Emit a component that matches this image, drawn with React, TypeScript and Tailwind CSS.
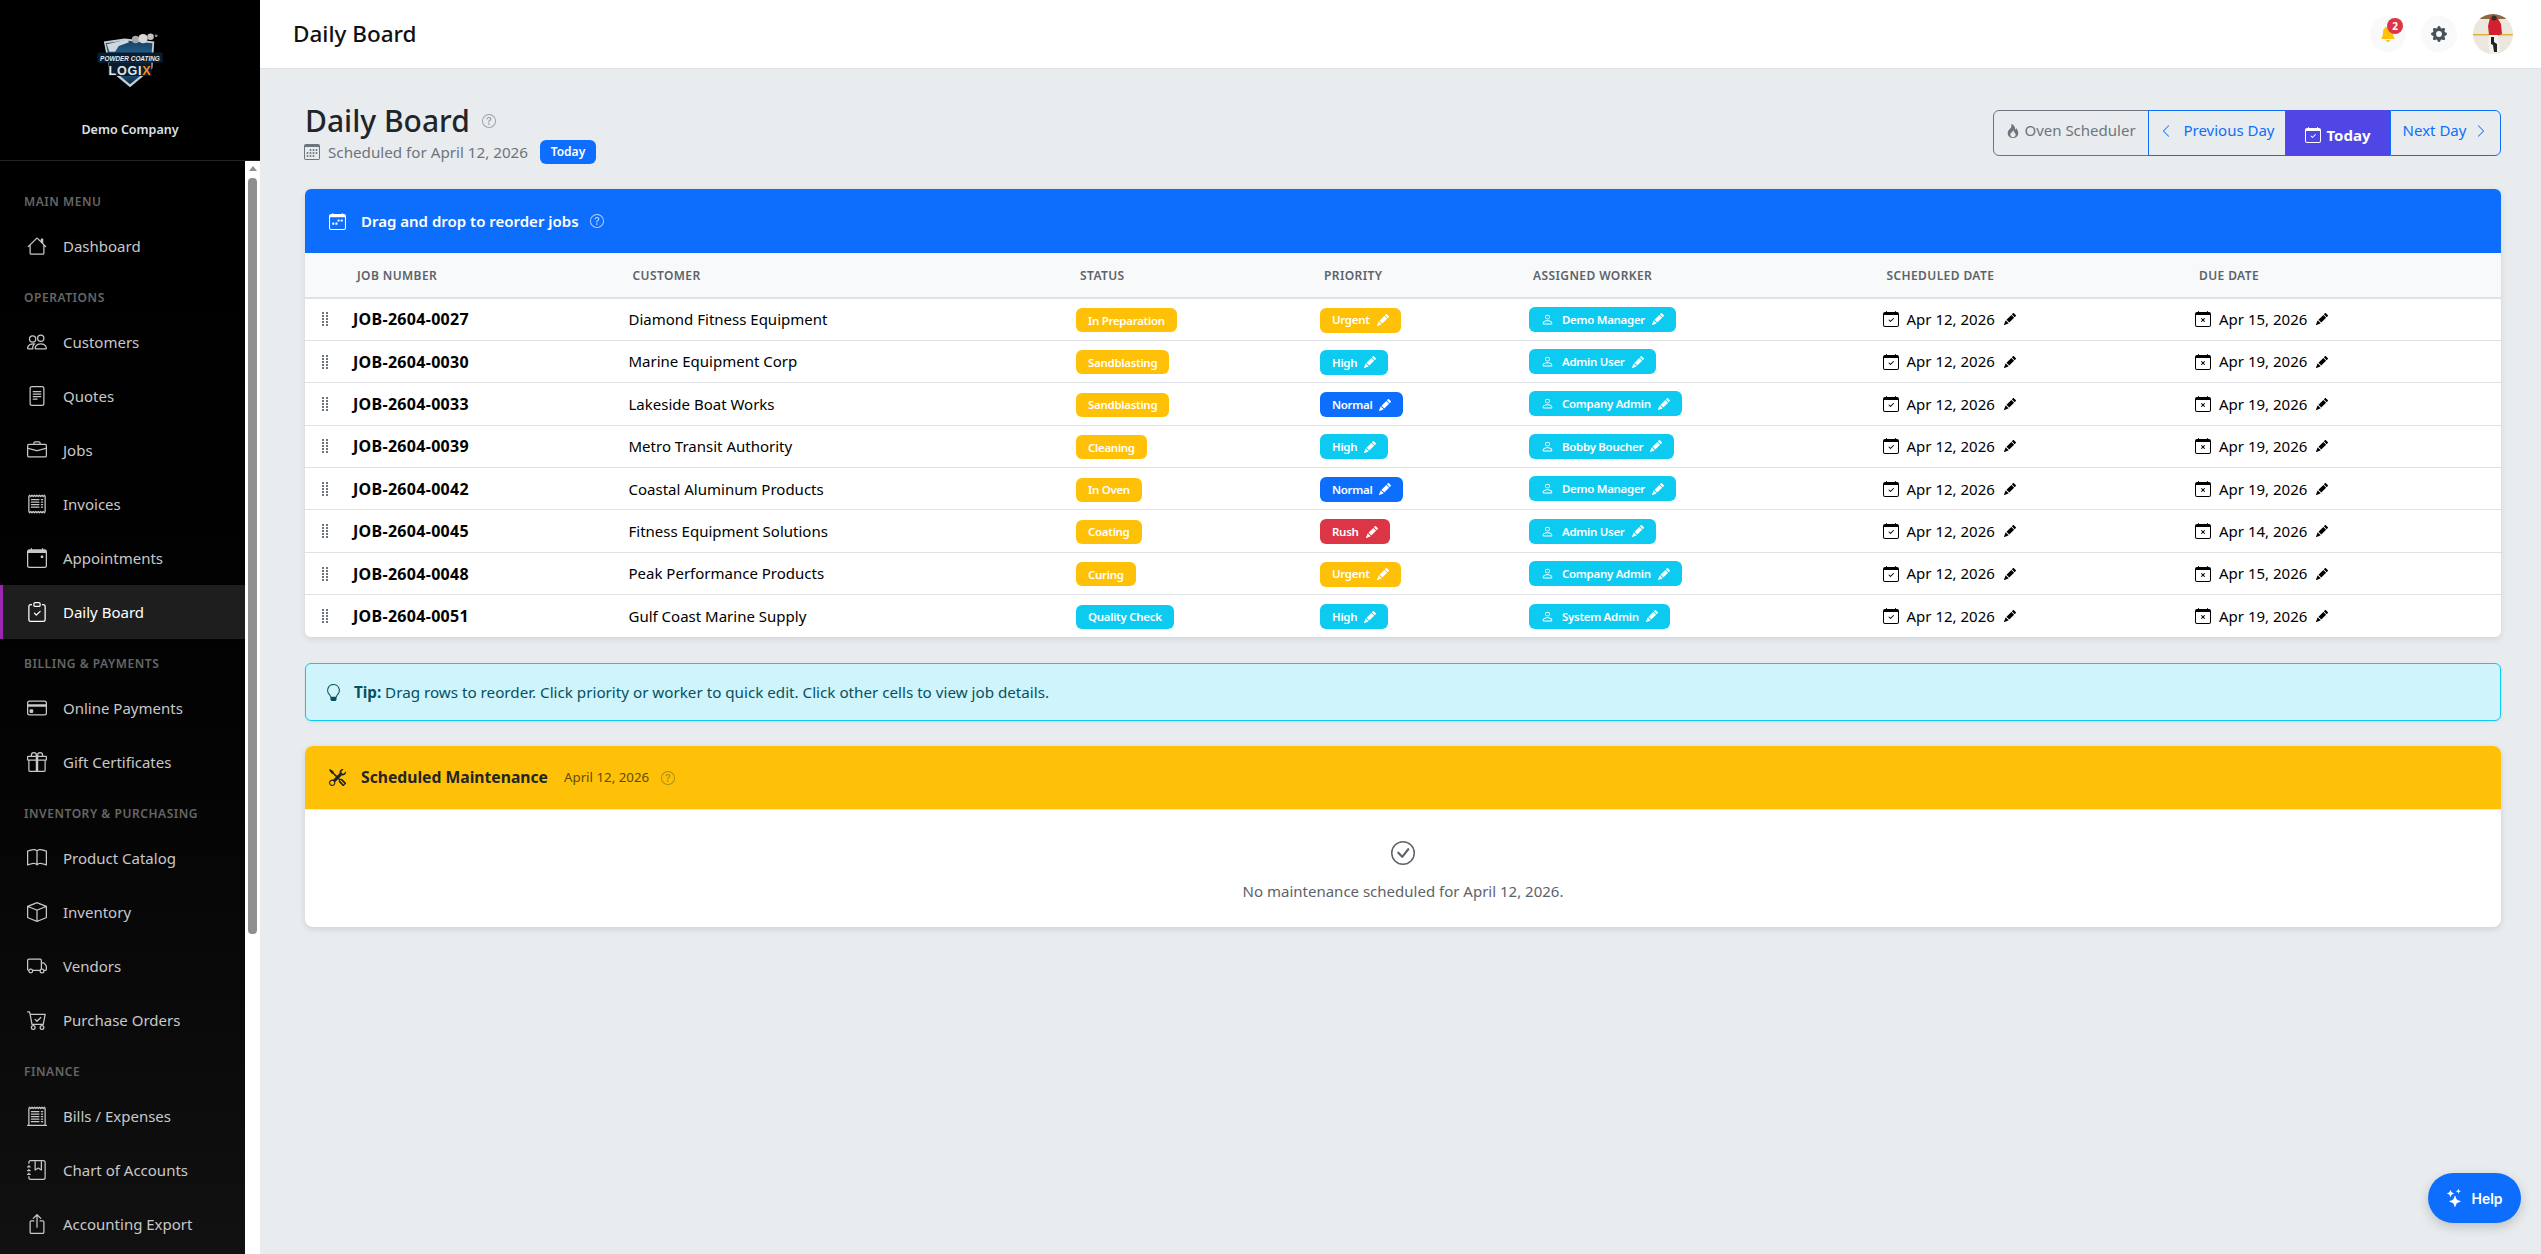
import type { ReactNode } from "react";
import {
  BsBellFill, BsBook, BsBox, BsBoxArrowUp, BsBriefcase, BsCalendar3, BsCalendarCheck, BsCalendarEvent,
  BsCalendarWeek, BsCalendarX, BsCartCheck, BsCheckCircle, BsChevronLeft, BsChevronRight, BsClipboardCheck,
  BsCreditCard, BsFileText, BsFire, BsGearFill, BsGift, BsHouse, BsJournalBookmark, BsLightbulb,
  BsPencilFill, BsPeople, BsPerson, BsQuestionCircle, BsReceipt, BsReceiptCutoff, BsStars, BsTools, BsTruck,
} from "react-icons/bs";

type NavItem = { label: string; icon: ReactNode; active?: boolean };
type NavSection = { title: string; items: NavItem[] };

const sections: NavSection[] = [
  { title: "Main Menu", items: [{ label: "Dashboard", icon: <BsHouse /> }] },
  {
    title: "Operations",
    items: [
      { label: "Customers", icon: <BsPeople /> },
      { label: "Quotes", icon: <BsFileText /> },
      { label: "Jobs", icon: <BsBriefcase /> },
      { label: "Invoices", icon: <BsReceipt /> },
      { label: "Appointments", icon: <BsCalendarEvent /> },
      { label: "Daily Board", icon: <BsClipboardCheck />, active: true },
    ],
  },
  {
    title: "Billing & Payments",
    items: [
      { label: "Online Payments", icon: <BsCreditCard /> },
      { label: "Gift Certificates", icon: <BsGift /> },
    ],
  },
  {
    title: "Inventory & Purchasing",
    items: [
      { label: "Product Catalog", icon: <BsBook /> },
      { label: "Inventory", icon: <BsBox /> },
      { label: "Vendors", icon: <BsTruck /> },
      { label: "Purchase Orders", icon: <BsCartCheck /> },
    ],
  },
  {
    title: "Finance",
    items: [
      { label: "Bills / Expenses", icon: <BsReceiptCutoff /> },
      { label: "Chart of Accounts", icon: <BsJournalBookmark /> },
      { label: "Accounting Export", icon: <BsBoxArrowUp /> },
    ],
  },
];

const amber = "bg-[#ffc107]";
const cyan = "bg-[#0dcaf0]";
const blue = "bg-[#0d6efd]";
const red = "bg-[#dc3545]";

const jobs = [
  { num: "JOB-2604-0027", customer: "Diamond Fitness Equipment", status: "In Preparation", statusBg: amber, priority: "Urgent", priorityBg: amber, worker: "Demo Manager", due: "Apr 15, 2026" },
  { num: "JOB-2604-0030", customer: "Marine Equipment Corp", status: "Sandblasting", statusBg: amber, priority: "High", priorityBg: cyan, worker: "Admin User", due: "Apr 19, 2026" },
  { num: "JOB-2604-0033", customer: "Lakeside Boat Works", status: "Sandblasting", statusBg: amber, priority: "Normal", priorityBg: blue, worker: "Company Admin", due: "Apr 19, 2026" },
  { num: "JOB-2604-0039", customer: "Metro Transit Authority", status: "Cleaning", statusBg: amber, priority: "High", priorityBg: cyan, worker: "Bobby Boucher", due: "Apr 19, 2026" },
  { num: "JOB-2604-0042", customer: "Coastal Aluminum Products", status: "In Oven", statusBg: amber, priority: "Normal", priorityBg: blue, worker: "Demo Manager", due: "Apr 19, 2026" },
  { num: "JOB-2604-0045", customer: "Fitness Equipment Solutions", status: "Coating", statusBg: amber, priority: "Rush", priorityBg: red, worker: "Admin User", due: "Apr 14, 2026" },
  { num: "JOB-2604-0048", customer: "Peak Performance Products", status: "Curing", statusBg: amber, priority: "Urgent", priorityBg: amber, worker: "Company Admin", due: "Apr 15, 2026" },
  { num: "JOB-2604-0051", customer: "Gulf Coast Marine Supply", status: "Quality Check", statusBg: cyan, priority: "High", priorityBg: cyan, worker: "System Admin", due: "Apr 19, 2026" },
];

const headers = ["Job Number", "Customer", "Status", "Priority", "Assigned Worker", "Scheduled Date", "Due Date"];

/* Logo du menu */
function Logo() {
  return (
    <svg width="68" height="56" viewBox="0 0 72 60">
      <defs>
        <linearGradient id="shield" x1="0" y1="0" x2="0" y2="1">
          <stop offset="0" stopColor="#173f63" />
          <stop offset="0.55" stopColor="#2a78ad" />
          <stop offset="1" stopColor="#0b2740" />
        </linearGradient>
      </defs>
      <path d="M8 9 L30 6 L62 9 L60 38 L36 58 L14 40 Z" fill="#c5ced6" />
      <path d="M10 11 L31 8 L60 11 L58 37 L36 55 L16 38 Z" fill="url(#shield)" />
      <path d="M11 12 L33 7 L35 10 L24 14 L20 20 L14 20 Z" fill="#cfd8df" />
      <circle cx="42" cy="7" r="4" fill="#a9a9a9" />
      <circle cx="50" cy="6" r="5" fill="#d8d8d8" />
      <circle cx="58" cy="4" r="3.5" fill="#c4c4c4" />
      <circle cx="64" cy="3" r="1.5" fill="#8d8d8d" />
      <rect x="1" y="21" width="70" height="11" rx="2" fill="#0a1c2e" />
      <rect x="13" y="32" width="46" height="14" fill="#0a1c2e" />
      <text x="36" y="29.5" textAnchor="middle" textLength="64" lengthAdjust="spacingAndGlyphs" fontFamily="Liberation Sans, sans-serif" fontStyle="italic" fontWeight="700" fontSize="7" fill="#e8edf2">POWDER COATING</text>
      <text x="36" y="44.5" textAnchor="middle" fontFamily="Liberation Sans, sans-serif" fontWeight="700" fontSize="13.5" letterSpacing="0.8" fill="#dfe5ea">
        LOGI<tspan fill="#f28c1e">X</tspan>
      </text>
    </svg>
  );
}

/* Photo de profil */
function Avatar() {
  return (
    <svg width="40" height="40" viewBox="0 0 40 40" className="rounded-full">
      <rect width="40" height="40" fill="#ece7de" />
      <rect width="40" height="5" fill="#8a6a45" />
      <rect y="20" width="40" height="1.5" fill="#d9b53a" />
      <path d="M17 4 L24 3 L28 10 L29 20 L24 22 L16 21 L15 12 Z" fill="#d3202e" />
      <path d="M16 21 L25 21 L27 36 L23 40 L17 39 L15 30 Z" fill="#f2f2f2" />
      <path d="M18 23 L21 23 L21 28 L24 30 L24 38 L21 38 L20 31 L18 30 Z" fill="#222222" />
      <circle cx="21" cy="4" r="2.5" fill="#3a2b22" />
    </svg>
  );
}

function Grip() {
  return (
    <svg width="6" height="14" viewBox="0 0 6 14" fill="#6c757d">
      {[0, 3, 6, 9, 12].map((y) => (
        <g key={y}>
          <rect x="0" y={y} width="2" height="2" />
          <rect x="4" y={y} width="2" height="2" />
        </g>
      ))}
    </svg>
  );
}

function Sidebar() {
  return (
    <aside className="flex h-full w-[260px] shrink-0 flex-col bg-gradient-to-b from-black to-[#111111]">
      <div className="flex h-[161px] shrink-0 flex-col items-center border-b border-[#222222] pt-[33px]">
        <Logo />
        <div className="mt-[32px] text-[12.5px] font-semibold leading-[18px] text-[#dee2e6]">Demo Company</div>
      </div>
      <div className="flex min-h-0 flex-1">
        <nav className="min-w-0 flex-1 overflow-hidden pt-[17px]">
          {sections.map((section, i) => (
            <div key={section.title}>
              <div className={`${i === 0 ? "pt-[16px]" : "pt-[17px]"} pb-[9px] pl-[24px] text-[12px] font-semibold uppercase leading-[16px] tracking-[0.55px] text-[#666666]`}>
                {section.title}
              </div>
              {section.items.map((item) => (
                <div
                  key={item.label}
                  className={`flex h-[54px] items-center border-l-[3px] pl-[24px] text-[15px] ${
                    item.active ? "border-[#9c27b0] bg-[#1e1e1e] text-white" : "border-transparent text-[#c8c8c8]"
                  }`}
                >
                  <span className="flex w-[36px] text-[20px]">{item.icon}</span>
                  {item.label}
                </div>
              ))}
            </div>
          ))}
        </nav>
        <div className="relative w-[15px] shrink-0 bg-white">
          <div className="mx-auto mt-[5px] h-0 w-0 border-x-[4px] border-b-[5px] border-x-transparent border-b-[#8f8f8f]" />
          <div className="mx-[3px] mt-[7px] h-[756px] rounded-[4px] bg-[#8f8f8f]" />
        </div>
      </div>
    </aside>
  );
}

function TopBar() {
  return (
    <header className="flex h-[69px] shrink-0 items-center justify-between border-b border-[#dee2e6] bg-white pl-[33px] pr-[28px]">
      <h1 className="text-[22.5px] font-medium leading-none text-[#111111]">Daily Board</h1>
      <div className="flex items-center">
        <div className="relative flex h-[36px] w-[36px] items-center justify-center rounded-full bg-[#f8f9fa] text-[16px] text-[#ffc107]">
          <BsBellFill />
          <span className="absolute right-[3px] top-[2px] flex h-[16px] w-[16px] items-center justify-center rounded-full bg-[#dc3545] text-[10px] font-bold text-white">2</span>
        </div>
        <div className="ml-[15px] flex h-[36px] w-[36px] items-center justify-center rounded-full bg-[#f8f9fa] text-[16px] text-[#495057]">
          <BsGearFill />
        </div>
        <div className="ml-[16px]">
          <Avatar />
        </div>
      </div>
    </header>
  );
}

function DayButtons() {
  return (
    <div className="mt-[9px] flex h-[46px] text-[15px]">
      <div className="flex w-[156px] items-center justify-center gap-[4px] rounded-l-[6px] border border-[#6c757d] pb-[5px] text-[#6c757d]">
        <BsFire className="text-[14px]" />
        Oven Scheduler
      </div>
      <div className="-ml-px flex w-[138px] items-center justify-center gap-[10px] border border-[#0d6efd] pb-[5px] text-[#0d6efd]">
        <BsChevronLeft className="text-[14px]" />
        Previous Day
      </div>
      <div className="flex w-[104px] items-center justify-center gap-[5px] bg-[#4f46e5] pt-[4px] font-bold text-white">
        <BsCalendarCheck className="text-[16px]" />
        Today
      </div>
      <div className="flex w-[111px] items-center justify-center gap-[8px] rounded-r-[6px] border border-[#0d6efd] pb-[5px] text-[#0d6efd]">
        Next Day
        <BsChevronRight className="text-[14px]" />
      </div>
    </div>
  );
}

function JobsTable() {
  return (
    <div className="overflow-hidden rounded-[6px] bg-white shadow-[0_2px_6px_rgba(0,0,0,0.1)]">
      <div className="flex h-[64px] items-center bg-[#0d6efd] pl-[24px] text-white">
        <BsCalendarWeek className="text-[17px]" />
        <span className="ml-[15px] text-[15px] font-semibold">Drag and drop to reorder jobs</span>
        <BsQuestionCircle className="ml-[11px] text-[14px] opacity-70" />
      </div>
      <table className="w-full table-fixed border-collapse">
        <colgroup>
          <col className="w-[40px]" />
          <col className="w-[275.5px]" />
          <col className="w-[447.5px]" />
          <col className="w-[244px]" />
          <col className="w-[209px]" />
          <col className="w-[353.5px]" />
          <col className="w-[312.5px]" />
          <col />
        </colgroup>
        <thead>
          <tr className="h-[45px] border-b-2 border-[#dee2e6] bg-[#f8f9fa]">
            <th />
            {headers.map((h) => (
              <th key={h} className="pl-[12px] pt-[1px] text-left text-[12px] font-semibold uppercase tracking-[0.4px] text-[#5c636a]">
                {h}
              </th>
            ))}
          </tr>
        </thead>
        <tbody>
          {jobs.map((job) => (
            <tr key={job.num} className="h-[42.4px] border-b border-[#dee2e6] last:border-b-0">
              <td className="pl-[17px]">
                <Grip />
              </td>
              <td className="pl-[8px] text-[16px] font-bold tracking-[0.3px] text-black">{job.num}</td>
              <td className="pl-[8px] text-[15px] text-black">{job.customer}</td>
              <td className="pl-[8px]">
                <span className={`inline-flex h-[24px] items-center rounded-[6px] px-[12px] text-[11.5px] font-semibold tracking-[-0.3px] text-white ${job.statusBg}`}>
                  {job.status}
                </span>
              </td>
              <td className="pl-[8px]">
                <span className={`inline-flex h-[25px] items-center gap-[7px] rounded-[6px] px-[12px] text-[11.5px] font-semibold tracking-[-0.3px] text-white ${job.priorityBg}`}>
                  {job.priority}
                  <BsPencilFill className="text-[12px]" />
                </span>
              </td>
              <td className="pl-[8px]">
                <span className="inline-flex h-[25px] items-center rounded-[6px] bg-[#0dcaf0] px-[12px] text-[11.5px] font-semibold tracking-[-0.3px] text-white">
                  <BsPerson className="mr-[8px] text-[13px]" />
                  {job.worker}
                  <BsPencilFill className="ml-[7px] text-[12px]" />
                </span>
              </td>
              <td className="pl-[8px]">
                <DateCell icon={<BsCalendarCheck />} value="Apr 12, 2026" />
              </td>
              <td className="pl-[8px]">
                <DateCell icon={<BsCalendarX />} value={job.due} />
              </td>
            </tr>
          ))}
        </tbody>
      </table>
    </div>
  );
}

function DateCell({ icon, value }: { icon: ReactNode; value: string }) {
  return (
    <span className="flex items-center text-[15px] text-black">
      <span className="mr-[8px] text-[16px]">{icon}</span>
      {value}
      <BsPencilFill className="ml-[9px] text-[12px]" />
    </span>
  );
}

export default function App() {
  return (
    <div className="relative flex h-screen overflow-hidden bg-[#e9ecef] font-['Noto_Sans',sans-serif] text-[#212529]">
      <Sidebar />
      <main className="flex min-w-0 flex-1 flex-col">
        <TopBar />
        <div className="flex-1 pl-[45px] pr-[40px] pt-[32px]">
          <div className="mb-[25px] flex items-start justify-between">
            <div>
              <div className="flex h-[39px] items-center">
                <span className="text-[30px] font-medium leading-none">Daily Board</span>
                <BsQuestionCircle className="ml-[12px] text-[14px] text-[#9a9fa5]" />
              </div>
              <div className="flex h-[24px] items-center text-[15.2px] text-[#6c757d]">
                <BsCalendar3 className="mr-[8px] ml-[-1px] text-[16px]" />
                Scheduled for April 12, 2026
                <span className="ml-[12px] flex h-[24px] w-[56px] items-center justify-center rounded-[6px] bg-[#0d6efd] text-[12px] font-semibold text-white">Today</span>
              </div>
            </div>
            <DayButtons />
          </div>

          <JobsTable />

          <div className="mt-[26px] flex h-[58px] items-center rounded-[6px] border border-[#0dcaf0] bg-[#cff4fc] pl-[19px] text-[15.2px] text-[#055160] shadow-[0_1px_3px_rgba(0,0,0,0.08)]">
            <BsLightbulb className="mr-[12px] text-[17px]" />
            <span>
              <strong className="font-bold">Tip:</strong> Drag rows to reorder. Click priority or worker to quick edit. Click other cells to view job details.
            </span>
          </div>

          <div className="mt-[25px] overflow-hidden rounded-[8px] bg-white shadow-[0_2px_6px_rgba(0,0,0,0.12)]">
            <div className="flex h-[64px] items-center border-b border-[#e9ecef] bg-[#ffc107] pl-[24px] text-[#212529]">
              <BsTools className="text-[17px]" />
              <span className="ml-[15px] text-[15.7px] font-bold">Scheduled Maintenance</span>
              <span className="ml-[16px] text-[13.3px] text-[#5f4d0e]">April 12, 2026</span>
              <BsQuestionCircle className="ml-[12px] text-[14px] text-[#a98a1c]" />
            </div>
            <div className="flex h-[117px] flex-col items-center pt-[31px] text-[#5c636a]">
              <BsCheckCircle className="text-[24px]" />
              <div className="mt-[15px] text-[15px] leading-[22px]">No maintenance scheduled for April 12, 2026.</div>
            </div>
          </div>
        </div>
      </main>
      <div className="absolute bottom-[31px] right-[20px] flex h-[50px] w-[93px] items-center justify-center gap-[7px] rounded-full bg-[#0d6efd] font-['Inter',sans-serif] text-[14px] font-semibold text-white shadow-[0_4px_12px_rgba(0,0,0,0.18)]">
        <BsStars className="text-[18px]" />
        Help
      </div>
    </div>
  );
}
